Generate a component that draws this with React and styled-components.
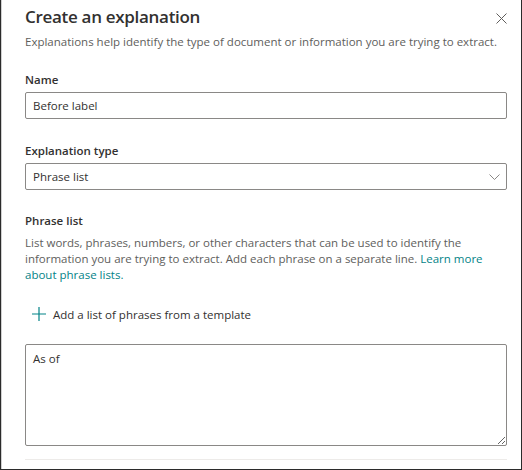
import styled, { createGlobalStyle } from 'styled-components'

const Global = createGlobalStyle`
  html, body {
    margin: 0;
    padding: 0;
    background: #ffffff;
  }
  * {
    box-sizing: border-box;
  }
`

const font = `"Open Sans", "Noto Sans", "Liberation Sans", sans-serif`

export default function App() {
  return (
    <>
      <Global />
      <Frame>
        <Header>
          <Title>Create an explanation</Title>
          <CloseButton aria-label="Close">
            <svg width="11" height="11" viewBox="0 0 11 11">
              <path d="M0.5 0.5 L10.5 10.5 M10.5 0.5 L0.5 10.5" stroke="#605e5c" strokeWidth="1" fill="none" />
            </svg>
          </CloseButton>
        </Header>
        <Subtitle>Explanations help identify the type of document or information you are trying to extract.</Subtitle>

        <Field $top={22}>
          <Label>Name</Label>
          <TextInput defaultValue="Before label" />
        </Field>

        <Field $top={24}>
          <Label>Explanation type</Label>
          <Select>
            <span>Phrase list</span>
            <svg width="11" height="6" viewBox="0 0 11 6">
              <path d="M0.5 0.5 L5.5 5.5 L10.5 0.5" stroke="#8a8886" strokeWidth="1" fill="none" />
            </svg>
          </Select>
        </Field>

        <Field $top={23}>
          <Label>Phrase list</Label>
          <Description>
            List words, phrases, numbers, or other characters that can be used to identify the
            information you are trying to extract. Add each phrase on a separate line.{' '}
            <Link href="#">Learn more about phrase lists.</Link>
          </Description>
        </Field>

        <AddButton>
          <svg width="14" height="14" viewBox="0 0 14 14">
            <path d="M7 0 V14 M0 7 H14" stroke="#038387" strokeWidth="1.2" fill="none" />
          </svg>
          <span>Add a list of phrases from a template</span>
        </AddButton>

        <TextArea defaultValue="As of" />
        <Divider />
      </Frame>
    </>
  )
}

const Frame = styled.div`
  width: 522px;
  height: 470px;
  border-left: 1px solid #2b2b2b;
  border-right: 1px solid #2b2b2b;
  border-bottom: 1px solid #2b2b2b;
  box-shadow: inset 1px 0 0 #d0d0d0;
  padding: 0 14px 0 24px;
  display: flex;
  flex-direction: column;
  font-family: ${font};
  color: #323130;
  overflow: hidden;
`

const Header = styled.div`
  display: flex;
  align-items: flex-start;
  justify-content: space-between;
  padding-top: 5px;
`

const Title = styled.h1`
  margin: 0;
  font-size: 17px;
  line-height: 24px;
  font-weight: 600;
  letter-spacing: -0.3px;
  color: #323130;
`

const CloseButton = styled.button`
  border: 0;
  background: none;
  padding: 0;
  margin-top: 8px;
  width: 11px;
  height: 11px;
  display: flex;
  cursor: pointer;
`

const Subtitle = styled.p`
  margin: 5px 0 0;
  font-size: 11.5px;
  line-height: 16px;
  color: #605e5c;
  white-space: nowrap;
`

const Field = styled.div`
  display: flex;
  flex-direction: column;
  margin-top: ${p => p.$top}px;
`

const Label = styled.label`
  font-size: 11.5px;
  line-height: 16px;
  font-weight: 600;
  color: #323130;
  margin-bottom: 4px;
`

const TextInput = styled.input`
  height: 27px;
  width: 100%;
  border: 1px solid #8a8886;
  border-radius: 2px;
  padding: 0 7px;
  font-family: ${font};
  font-size: 11.5px;
  color: #323130;
  outline: none;
`

const Select = styled.div`
  height: 27px;
  border: 1px solid #8a8886;
  border-radius: 2px;
  padding: 0 6px 0 7px;
  display: flex;
  align-items: center;
  justify-content: space-between;
  font-size: 11.5px;
  color: #323130;
`

const Description = styled.p`
  margin: 2px 0 0;
  font-size: 11.5px;
  line-height: 16px;
  color: #605e5c;
`

const Link = styled.a`
  color: #038387;
  text-decoration: none;
`

const AddButton = styled.button`
  margin-top: 21px;
  height: 20px;
  align-self: flex-start;
  display: flex;
  align-items: center;
  gap: 7px;
  border: 0;
  background: none;
  padding: 0 0 0 7px;
  font-family: ${font};
  font-size: 11.5px;
  color: #323130;
  cursor: pointer;
`

const TextArea = styled.textarea`
  margin-top: 20px;
  width: 100%;
  height: 102px;
  border: 1px solid #8a8886;
  border-radius: 2px;
  padding: 6px 7px;
  font-family: ${font};
  font-size: 11.5px;
  line-height: 15px;
  color: #323130;
  resize: vertical;
  outline: none;
`

const Divider = styled.div`
  margin-top: 13px;
  height: 1px;
  flex-shrink: 0;
  background: #edebe9;
`
